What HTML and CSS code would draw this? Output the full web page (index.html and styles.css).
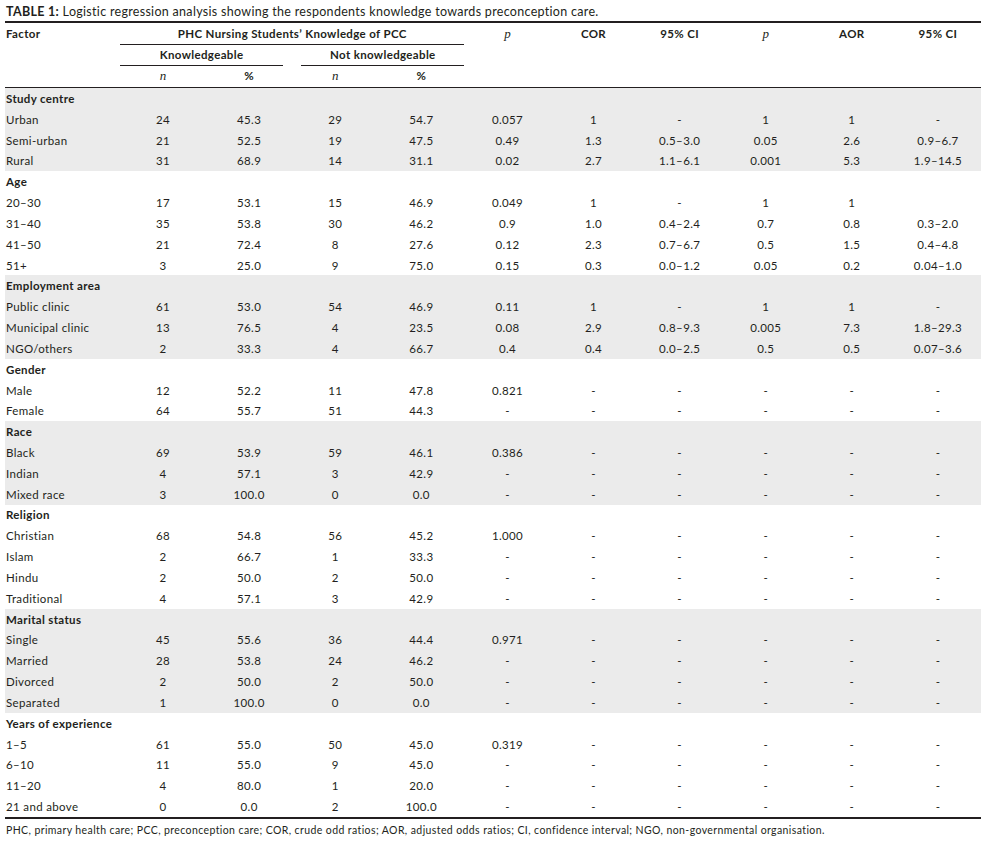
FILE: index.html
```html
<!DOCTYPE html>
<html>
<head>
<meta charset="utf-8">
<link rel="stylesheet" href="styles.css">
</head>
<body>
<div class="wrap">
<div class="title"><b>TABLE 1:</b> Logistic regression analysis showing the respondents knowledge towards preconception care.</div>
<table class="tbl">
<colgroup>
<col class="c-factor"><col span="10" class="c-num">
</colgroup>
<thead>
<tr class="h1">
<th class="left">Factor</th>
<th colspan="4"><div class="hl">PHC Nursing Students’ Knowledge of PCC</div></th>
<th><span class="it">p</span></th><th>COR</th><th>95% CI</th><th><span class="it">p</span></th><th>AOR</th><th>95% CI</th>
</tr>
<tr class="h2">
<th></th>
<th colspan="2"><div class="hl hl-r">Knowledgeable</div></th>
<th colspan="2"><div class="hl hl-l">Not knowledgeable</div></th>
<th></th><th></th><th></th><th></th><th></th><th></th>
</tr>
<tr class="h3">
<th></th><th><span class="it">n</span></th><th>%</th><th><span class="it">n</span></th><th>%</th>
<th></th><th></th><th></th><th></th><th></th><th></th>
</tr>
</thead>
<tbody class="grp shade">
<tr><td class="cat" colspan="11">Study centre</td></tr>
<tr><td>Urban</td><td>24</td><td>45.3</td><td>29</td><td>54.7</td><td>0.057</td><td>1</td><td>-</td><td>1</td><td>1</td><td>-</td></tr>
<tr><td>Semi-urban</td><td>21</td><td>52.5</td><td>19</td><td>47.5</td><td>0.49</td><td>1.3</td><td>0.5–3.0</td><td>0.05</td><td>2.6</td><td>0.9–6.7</td></tr>
<tr><td>Rural</td><td>31</td><td>68.9</td><td>14</td><td>31.1</td><td>0.02</td><td>2.7</td><td>1.1–6.1</td><td>0.001</td><td>5.3</td><td>1.9–14.5</td></tr>
</tbody>
<tbody class="grp">
<tr><td class="cat" colspan="11">Age</td></tr>
<tr><td>20–30</td><td>17</td><td>53.1</td><td>15</td><td>46.9</td><td>0.049</td><td>1</td><td>-</td><td>1</td><td>1</td><td></td></tr>
<tr><td>31–40</td><td>35</td><td>53.8</td><td>30</td><td>46.2</td><td>0.9</td><td>1.0</td><td>0.4–2.4</td><td>0.7</td><td>0.8</td><td>0.3–2.0</td></tr>
<tr><td>41–50</td><td>21</td><td>72.4</td><td>8</td><td>27.6</td><td>0.12</td><td>2.3</td><td>0.7–6.7</td><td>0.5</td><td>1.5</td><td>0.4–4.8</td></tr>
<tr><td>51+</td><td>3</td><td>25.0</td><td>9</td><td>75.0</td><td>0.15</td><td>0.3</td><td>0.0–1.2</td><td>0.05</td><td>0.2</td><td>0.04–1.0</td></tr>
</tbody>
<tbody class="grp shade">
<tr><td class="cat" colspan="11">Employment area</td></tr>
<tr><td>Public clinic</td><td>61</td><td>53.0</td><td>54</td><td>46.9</td><td>0.11</td><td>1</td><td>-</td><td>1</td><td>1</td><td>-</td></tr>
<tr><td>Municipal clinic</td><td>13</td><td>76.5</td><td>4</td><td>23.5</td><td>0.08</td><td>2.9</td><td>0.8–9.3</td><td>0.005</td><td>7.3</td><td>1.8–29.3</td></tr>
<tr><td>NGO/others</td><td>2</td><td>33.3</td><td>4</td><td>66.7</td><td>0.4</td><td>0.4</td><td>0.0–2.5</td><td>0.5</td><td>0.5</td><td>0.07–3.6</td></tr>
</tbody>
<tbody class="grp">
<tr><td class="cat" colspan="11">Gender</td></tr>
<tr><td>Male</td><td>12</td><td>52.2</td><td>11</td><td>47.8</td><td>0.821</td><td>-</td><td>-</td><td>-</td><td>-</td><td>-</td></tr>
<tr><td>Female</td><td>64</td><td>55.7</td><td>51</td><td>44.3</td><td>-</td><td>-</td><td>-</td><td>-</td><td>-</td><td>-</td></tr>
</tbody>
<tbody class="grp shade">
<tr><td class="cat" colspan="11">Race</td></tr>
<tr><td>Black</td><td>69</td><td>53.9</td><td>59</td><td>46.1</td><td>0.386</td><td>-</td><td>-</td><td>-</td><td>-</td><td>-</td></tr>
<tr><td>Indian</td><td>4</td><td>57.1</td><td>3</td><td>42.9</td><td>-</td><td>-</td><td>-</td><td>-</td><td>-</td><td>-</td></tr>
<tr><td>Mixed race</td><td>3</td><td>100.0</td><td>0</td><td>0.0</td><td>-</td><td>-</td><td>-</td><td>-</td><td>-</td><td>-</td></tr>
</tbody>
<tbody class="grp">
<tr><td class="cat" colspan="11">Religion</td></tr>
<tr><td>Christian</td><td>68</td><td>54.8</td><td>56</td><td>45.2</td><td>1.000</td><td>-</td><td>-</td><td>-</td><td>-</td><td>-</td></tr>
<tr><td>Islam</td><td>2</td><td>66.7</td><td>1</td><td>33.3</td><td>-</td><td>-</td><td>-</td><td>-</td><td>-</td><td>-</td></tr>
<tr><td>Hindu</td><td>2</td><td>50.0</td><td>2</td><td>50.0</td><td>-</td><td>-</td><td>-</td><td>-</td><td>-</td><td>-</td></tr>
<tr><td>Traditional</td><td>4</td><td>57.1</td><td>3</td><td>42.9</td><td>-</td><td>-</td><td>-</td><td>-</td><td>-</td><td>-</td></tr>
</tbody>
<tbody class="grp shade">
<tr><td class="cat" colspan="11">Marital status</td></tr>
<tr><td>Single</td><td>45</td><td>55.6</td><td>36</td><td>44.4</td><td>0.971</td><td>-</td><td>-</td><td>-</td><td>-</td><td>-</td></tr>
<tr><td>Married</td><td>28</td><td>53.8</td><td>24</td><td>46.2</td><td>-</td><td>-</td><td>-</td><td>-</td><td>-</td><td>-</td></tr>
<tr><td>Divorced</td><td>2</td><td>50.0</td><td>2</td><td>50.0</td><td>-</td><td>-</td><td>-</td><td>-</td><td>-</td><td>-</td></tr>
<tr><td>Separated</td><td>1</td><td>100.0</td><td>0</td><td>0.0</td><td>-</td><td>-</td><td>-</td><td>-</td><td>-</td><td>-</td></tr>
</tbody>
<tbody class="grp">
<tr><td class="cat" colspan="11">Years of experience</td></tr>
<tr><td>1–5</td><td>61</td><td>55.0</td><td>50</td><td>45.0</td><td>0.319</td><td>-</td><td>-</td><td>-</td><td>-</td><td>-</td></tr>
<tr><td>6–10</td><td>11</td><td>55.0</td><td>9</td><td>45.0</td><td>-</td><td>-</td><td>-</td><td>-</td><td>-</td><td>-</td></tr>
<tr><td>11–20</td><td>4</td><td>80.0</td><td>1</td><td>20.0</td><td>-</td><td>-</td><td>-</td><td>-</td><td>-</td><td>-</td></tr>
<tr><td>21 and above</td><td>0</td><td>0.0</td><td>2</td><td>100.0</td><td>-</td><td>-</td><td>-</td><td>-</td><td>-</td><td>-</td></tr>
</tbody>
</table>
<div class="foot">PHC, primary health care; PCC, preconception care; COR, crude odd ratios; AOR, adjusted odds ratios; CI, confidence interval; NGO, non-governmental organisation.</div>
</div>
</body>
</html>
```
FILE: styles.css
```css
html, body {
  margin: 0;
  padding: 0;
  background: #ffffff;
}
body {
  font-family: "Lato", "Open Sans", sans-serif;
  color: #231f20;
}
.wrap {
  width: 976px;
  padding-left: 5px;
}
.title {
  font-size: 12.5px;
  letter-spacing: 0.3px;
  line-height: 16px;
  padding-top: 4px;
  padding-bottom: 1px;
  padding-left: 1px;
}
.title b {
  font-weight: 700;
}
.tbl {
  width: 976px;
  table-layout: fixed;
  border-collapse: separate;
  border-spacing: 0;
  border-top: 2px solid #231f20;
  border-bottom: 2px solid #231f20;
  font-size: 11.5px;
  letter-spacing: 0.35px;
}
.c-factor { width: 115px; }
.c-num { width: 86.1px; }
.tbl th {
  padding: 0;
  font-weight: 700;
  text-align: center;
  vertical-align: top;
}
.tbl th.left {
  text-align: left;
  padding-left: 1px;
}
.h1 th { height: 22px; line-height: 21px; }
.h2 th { height: 21px; line-height: 20px; }
.h3 th { height: 21px; line-height: 20px; border-bottom: 1px solid #231f20; }
.hl {
  border-bottom: 1px solid #231f20;
}
.h1 .hl { line-height: 21px; }
.h2 .hl { line-height: 20px; }
.hl-r { margin-right: 9px; }
.hl-l { margin-left: 9px; }
.it {
  font-family: "Liberation Serif", serif;
  font-style: italic;
  font-weight: 400;
  font-size: 13px;
  letter-spacing: 0;
}
.tbl td {
  height: 20.83px;
  padding: 0;
  text-align: center;
  vertical-align: middle;
  white-space: nowrap;
}
.tbl td:first-child {
  text-align: left;
  padding-left: 1px;
}
.tbl td.cat {
  font-weight: 700;
}
.shade td {
  background: #ebebeb;
}
.foot {
  font-size: 10.5px;
  letter-spacing: 0.4px;
  line-height: 16px;
  padding-top: 3px;
  padding-left: 1px;
}
```
